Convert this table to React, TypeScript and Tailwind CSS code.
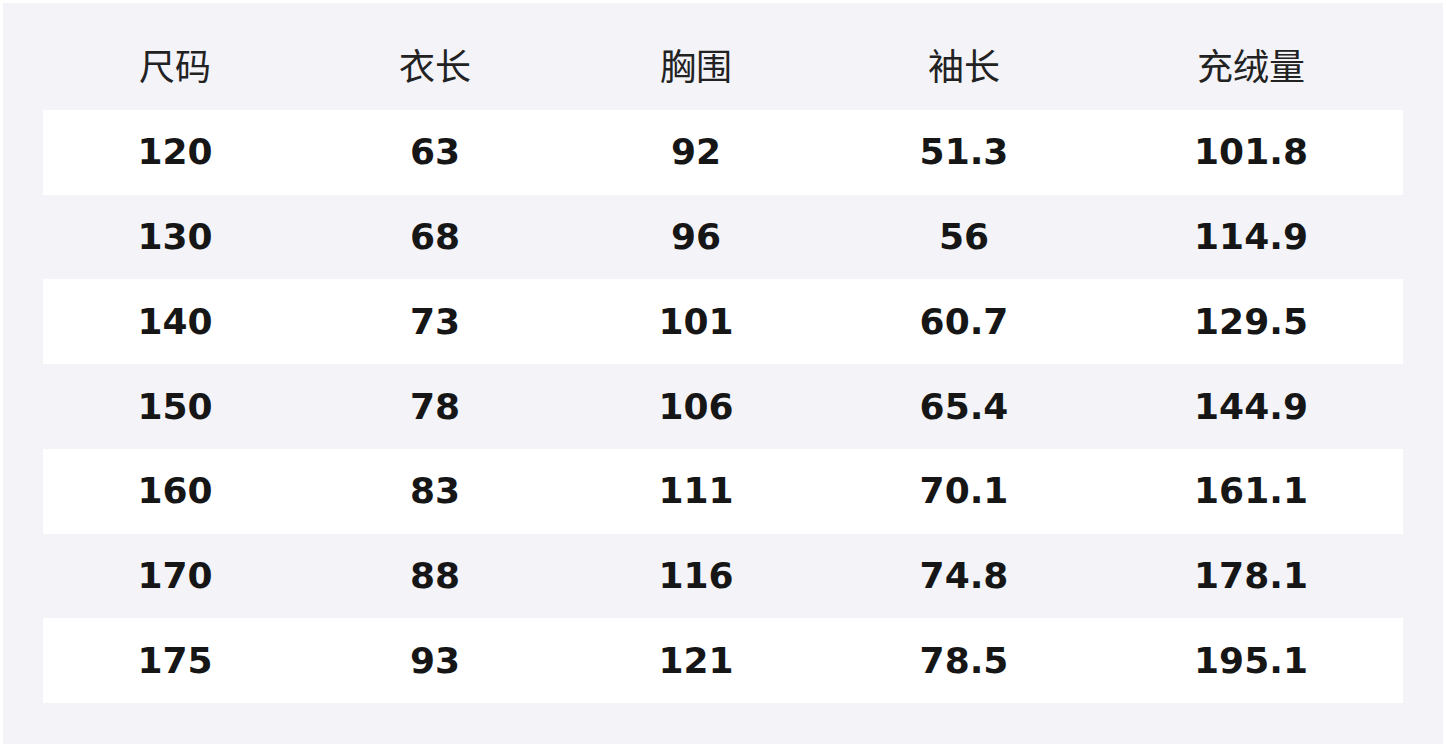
import React from "react";

const headers = ["尺码", "衣长", "胸围", "袖长", "充绒量"];
const rows = [
  ["120", "63", "92", "51.3", "101.8"],
  ["130", "68", "96", "56", "114.9"],
  ["140", "73", "101", "60.7", "129.5"],
  ["150", "78", "106", "65.4", "144.9"],
  ["160", "83", "111", "70.1", "161.1"],
  ["170", "88", "116", "74.8", "178.1"],
  ["175", "93", "121", "78.5", "195.1"],
];

export default function App() {
  return (
    <div
      className="bg-white p-[3px] w-[1446px] h-[748px]"
      style={{ fontFamily: '"DejaVu Sans", "Noto Sans CJK SC", sans-serif' }}
    >
      <div className="bg-[#f3f3f8] w-[1440px] h-[741px] px-[40px] pt-[22px] pb-[41px]">
        <div className="grid grid-cols-[264px_256px_266px_270px_304px] h-[85px] pb-[8px] items-center">
          {headers.map((h) => (
            <div
              key={h}
              className="text-center text-[36px] text-[#222] font-normal leading-none"
              style={{ fontFamily: '"Noto Sans CJK SC", sans-serif' }}
            >
              {h}
            </div>
          ))}
        </div>
        {rows.map((r, i) => (
          <div
            key={i}
            className={`grid grid-cols-[264px_256px_266px_270px_304px] h-[84.72px] items-center ${
              i % 2 === 0 ? "bg-white" : "bg-[#f3f3f8]"
            }`}
          >
            {r.map((c, j) => (
              <div
                key={j}
                className="text-center text-[36px] font-bold text-[#161616] leading-none"
              >
                {c}
              </div>
            ))}
          </div>
        ))}
      </div>
    </div>
  );
}
